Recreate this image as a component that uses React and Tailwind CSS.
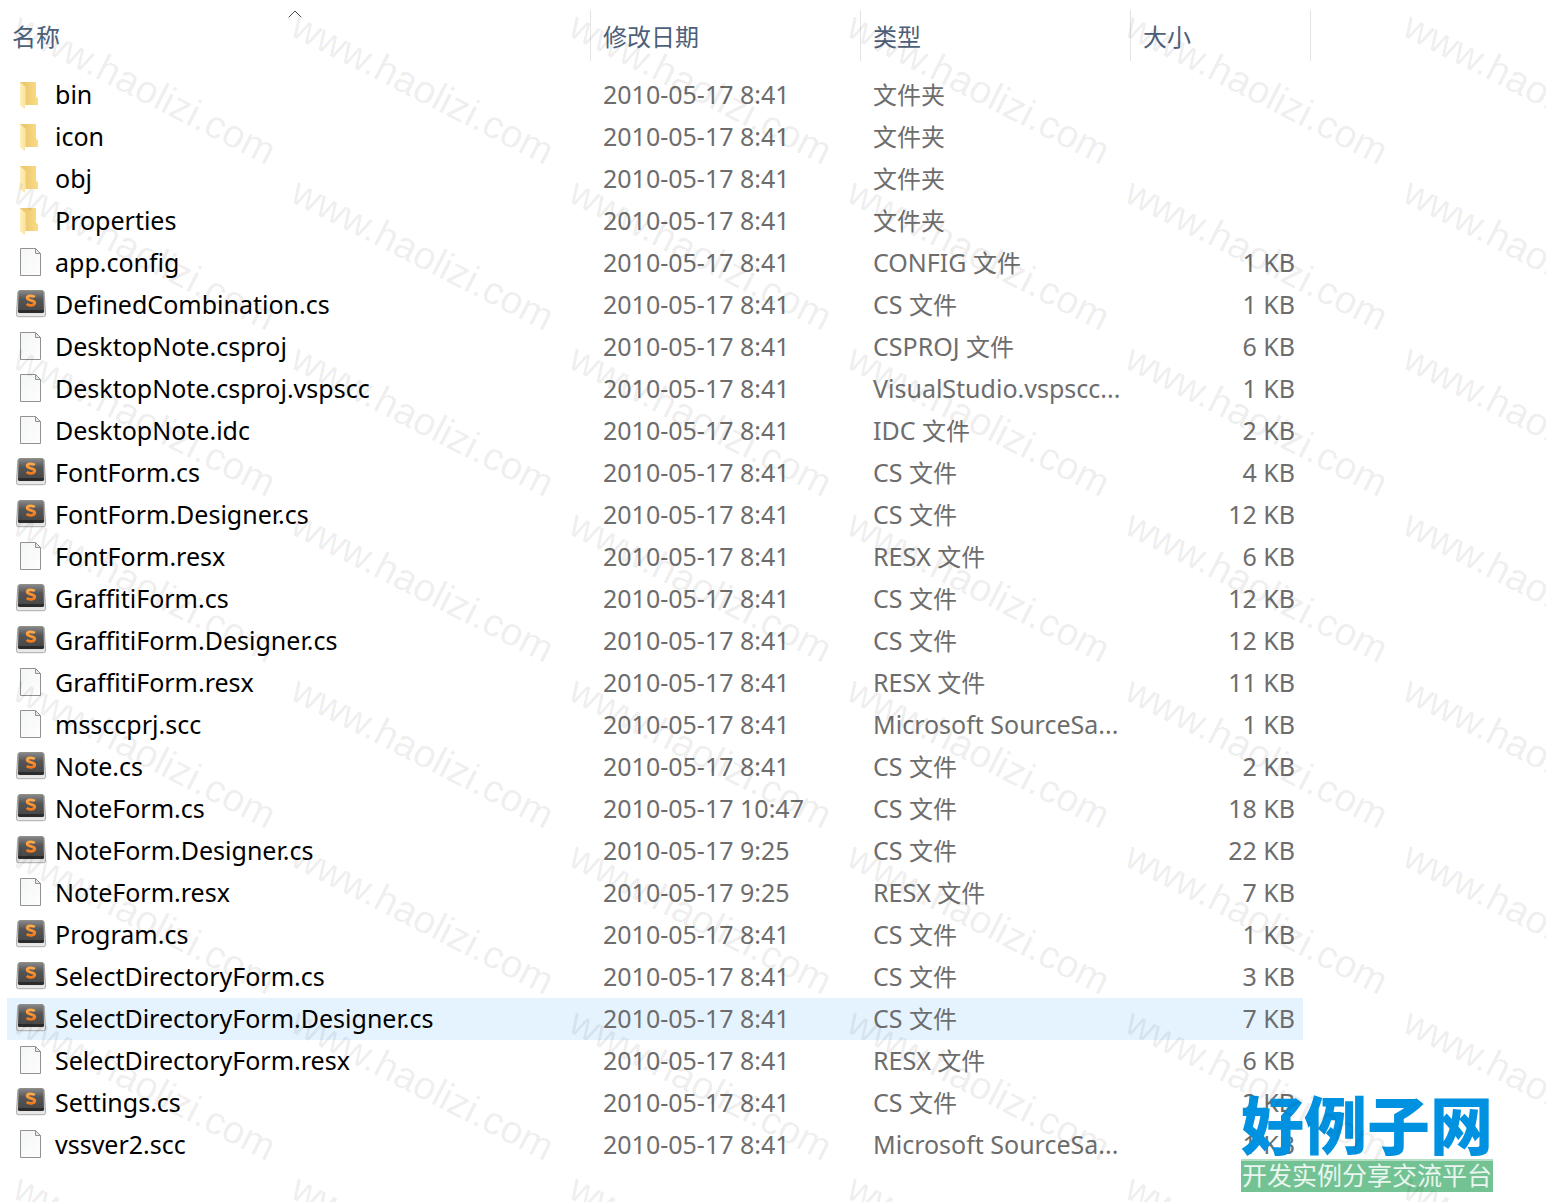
import clsx from "clsx";

const DAY = "2010-05-17";

const FILES = [
  { name: "bin", kind: "folder" },
  { name: "icon", kind: "folder" },
  { name: "obj", kind: "folder" },
  { name: "Properties", kind: "folder" },
  { name: "app.config", type: "CONFIG", size: 1 },
  { name: "DefinedCombination.cs", kind: "code", size: 1 },
  { name: "DesktopNote.csproj", type: "CSPROJ", size: 6 },
  { name: "DesktopNote.csproj.vspscc", label: "VisualStudio.vspscc...", size: 1 },
  { name: "DesktopNote.idc", type: "IDC", size: 2 },
  { name: "FontForm.cs", kind: "code", size: 4 },
  { name: "FontForm.Designer.cs", kind: "code", size: 12 },
  { name: "FontForm.resx", type: "RESX", size: 6 },
  { name: "GraffitiForm.cs", kind: "code", size: 12 },
  { name: "GraffitiForm.Designer.cs", kind: "code", size: 12 },
  { name: "GraffitiForm.resx", type: "RESX", size: 11 },
  { name: "mssccprj.scc", label: "Microsoft SourceSa...", size: 1 },
  { name: "Note.cs", kind: "code", size: 2 },
  { name: "NoteForm.cs", kind: "code", time: "10:47", size: 18 },
  { name: "NoteForm.Designer.cs", kind: "code", time: "9:25", size: 22 },
  { name: "NoteForm.resx", type: "RESX", time: "9:25", size: 7 },
  { name: "Program.cs", kind: "code", size: 1 },
  { name: "SelectDirectoryForm.cs", kind: "code", size: 3 },
  { name: "SelectDirectoryForm.Designer.cs", kind: "code", size: 7, hovered: true },
  { name: "SelectDirectoryForm.resx", type: "RESX", size: 6 },
  { name: "Settings.cs", kind: "code", size: 2 },
  { name: "vssver2.scc", label: "Microsoft SourceSa...", size: 1 },
];

function FolderIcon() {
  return (
    <svg viewBox="0 -1 32 32" className="size-8 shrink-0" aria-hidden>
      <path d="M5 3H21V17.5L23 19.5V26H8Z" fill="url(#folder-back)" />
      <path d="M5 3.3 10.8 8V26H10V30L5 26.2Z" fill="url(#folder-front)" />
    </svg>
  );
}

function PageIcon() {
  return (
    <svg viewBox="0 -1 32 32" className="size-8 shrink-0" aria-hidden>
      <path d="M5.5 1.5H20.5L25.5 6.5V28.5H5.5Z" fill="url(#page-fill)" stroke="#929292" />
      <path d="M20.5 1.5V6.5H25.5Z" fill="#e6e8e9" stroke="#929292" />
    </svg>
  );
}

function CodeIcon() {
  return (
    <svg viewBox="0 -1 32 32" className="size-8 shrink-0" aria-hidden>
      <path
        d="M5 1.5H27Q29 1.5 29.2 3.5L30.6 25.5Q30.6 27.7 28.5 27.7H3.5Q1.4 27.7 1.4 25.5L2.8 3.5Q3 1.5 5 1.5Z"
        fill="url(#key-base)"
        stroke="#8d8d8d"
        strokeWidth="0.7"
      />
      <path d="M5.6 1.2H26.4Q28.2 1.2 28.4 3L29 22Q29 24 27 24H5Q3 24 3 22L3.7 3Q3.9 1.2 5.6 1.2Z" fill="url(#key-top)" />
      <path d="M3 20.9H29L29 22Q29 24 27 24H5Q3 24 3 22Z" fill="#2b2b2b" />
      <path
        d="M19.8 8.1C18 6.4 12.3 6.1 12.2 9.1C12.2 11.8 19.8 10.8 19.8 13.8C19.7 17.1 13.7 16.8 11.7 14.9"
        fill="none"
        stroke="url(#key-mark)"
        strokeWidth="2.8"
      />
    </svg>
  );
}

// Gradients shared by every row icon
function IconDefs() {
  return (
    <svg className="absolute size-0" aria-hidden>
      <defs>
        <linearGradient id="folder-back">
          <stop offset="0.3" stopColor="#ecca72" />
          <stop offset="1" stopColor="#fbdc85" />
        </linearGradient>
        <linearGradient id="folder-front">
          <stop offset="0" stopColor="#fff0bd" />
          <stop offset="1" stopColor="#fbe09a" />
        </linearGradient>
        <linearGradient id="page-fill" x2="1" y2="1">
          <stop offset="0" stopColor="#f4f6f6" />
          <stop offset="1" stopColor="#fdfdfd" />
        </linearGradient>
        <linearGradient id="key-base" x2="0" y2="1">
          <stop offset="0" stopColor="#9a9a9a" />
          <stop offset="1" stopColor="#eeeeee" />
        </linearGradient>
        <linearGradient id="key-top" x2="0" y2="1">
          <stop offset="0" stopColor="#8b8b8b" />
          <stop offset="0.4" stopColor="#555555" />
          <stop offset="1" stopColor="#454545" />
        </linearGradient>
        <linearGradient id="key-mark" x2="0" y2="1">
          <stop offset="0" stopColor="#ffaa48" />
          <stop offset="1" stopColor="#f47a1c" />
        </linearGradient>
      </defs>
    </svg>
  );
}

const ICONS = { folder: FolderIcon, code: CodeIcon, page: PageIcon };

function TypeLabel({ file }) {
  if (file.label) return file.label;
  if (file.kind === "folder") return <span className="text-2xl">文件夹</span>;
  return (
    <>
      {file.type ?? "CS"} <span className="text-2xl">文件</span>
    </>
  );
}

function FileRow({ file }) {
  const Icon = ICONS[file.kind ?? "page"];
  const cell = clsx("h-[42px] p-0 pb-0.5 bg-clip-padding", file.hovered && "bg-[#e5f3ff]");
  return (
    <tr className="text-[25px] leading-8 whitespace-nowrap text-[#6d6d6d]">
      <td className={clsx(cell, "border-l-[7px] border-transparent")}>
        <div className="flex items-center gap-2 pl-2 text-black">
          <Icon />
          {file.name}
        </div>
      </td>
      <td className={cell}>
        <div className="px-3">
          {DAY} {file.time ?? "8:41"}
        </div>
      </td>
      <td className={cell}>
        <div className="px-3">
          <TypeLabel file={file} />
        </div>
      </td>
      <td className={clsx(cell, "border-r-8 border-transparent")}>
        <div className="pr-2 text-right">{file.size ? `${file.size} KB` : null}</div>
      </td>
    </tr>
  );
}

function Watermark() {
  return (
    <div className="pointer-events-none absolute inset-0 overflow-hidden" aria-hidden>
      <div className="grid auto-rows-[166px] grid-cols-[repeat(6,278px)] pt-2 pl-6">
        {Array.from({ length: 48 }, (_, i) => (
          <span
            key={i}
            className="origin-top-left rotate-27 font-['Liberation_Sans',sans-serif] text-[39px] leading-[34px] whitespace-nowrap text-black/8"
          >
            www.haolizi.com
          </span>
        ))}
      </div>
    </div>
  );
}

function SiteBadge() {
  return (
    <div className="absolute right-[53px] bottom-[10px] text-center whitespace-nowrap">
      <p className="text-[63px] leading-[68px] font-black text-[#0092e0]">好例子网</p>
      <p className="border-t-2 border-[#b4dfc5] bg-[#72c293] pb-0.5 text-[25px] leading-[29px] text-white/85">
        开发实例分享交流平台
      </p>
    </div>
  );
}

export default function App() {
  const th = "relative h-[51px] border-r border-[#e3e3e3] px-3 pt-0.5 pb-0 font-normal";
  return (
    <main className="relative min-h-screen bg-white pt-[10px] pr-[235px] font-['Noto_Sans','Noto_Sans_CJK_SC',sans-serif]">
      <IconDefs />
      <table className="w-full table-fixed border-separate border-spacing-0">
        <colgroup>
          <col />
          <col className="w-[270px]" />
          <col className="w-[270px]" />
          <col className="w-[180px]" />
        </colgroup>
        <thead>
          <tr className="text-left text-2xl text-[#4c607a]">
            <th className={th} aria-sort="ascending">
              名称
              <svg
                viewBox="0 0 14 8"
                className="absolute inset-x-0 top-0 mx-auto h-2 w-[14px]"
                fill="none"
                stroke="#4a4a4a"
                aria-hidden
              >
                <path d="M0.7 7.3 7 1 13.3 7.3" />
              </svg>
            </th>
            <th className={th}>修改日期</th>
            <th className={th}>类型</th>
            <th className={th}>大小</th>
          </tr>
        </thead>
        <tbody className="before:block before:h-[13px] before:content-['']">
          {FILES.map((file) => (
            <FileRow key={file.name} file={file} />
          ))}
        </tbody>
      </table>
      <SiteBadge />
      <Watermark />
    </main>
  );
}
